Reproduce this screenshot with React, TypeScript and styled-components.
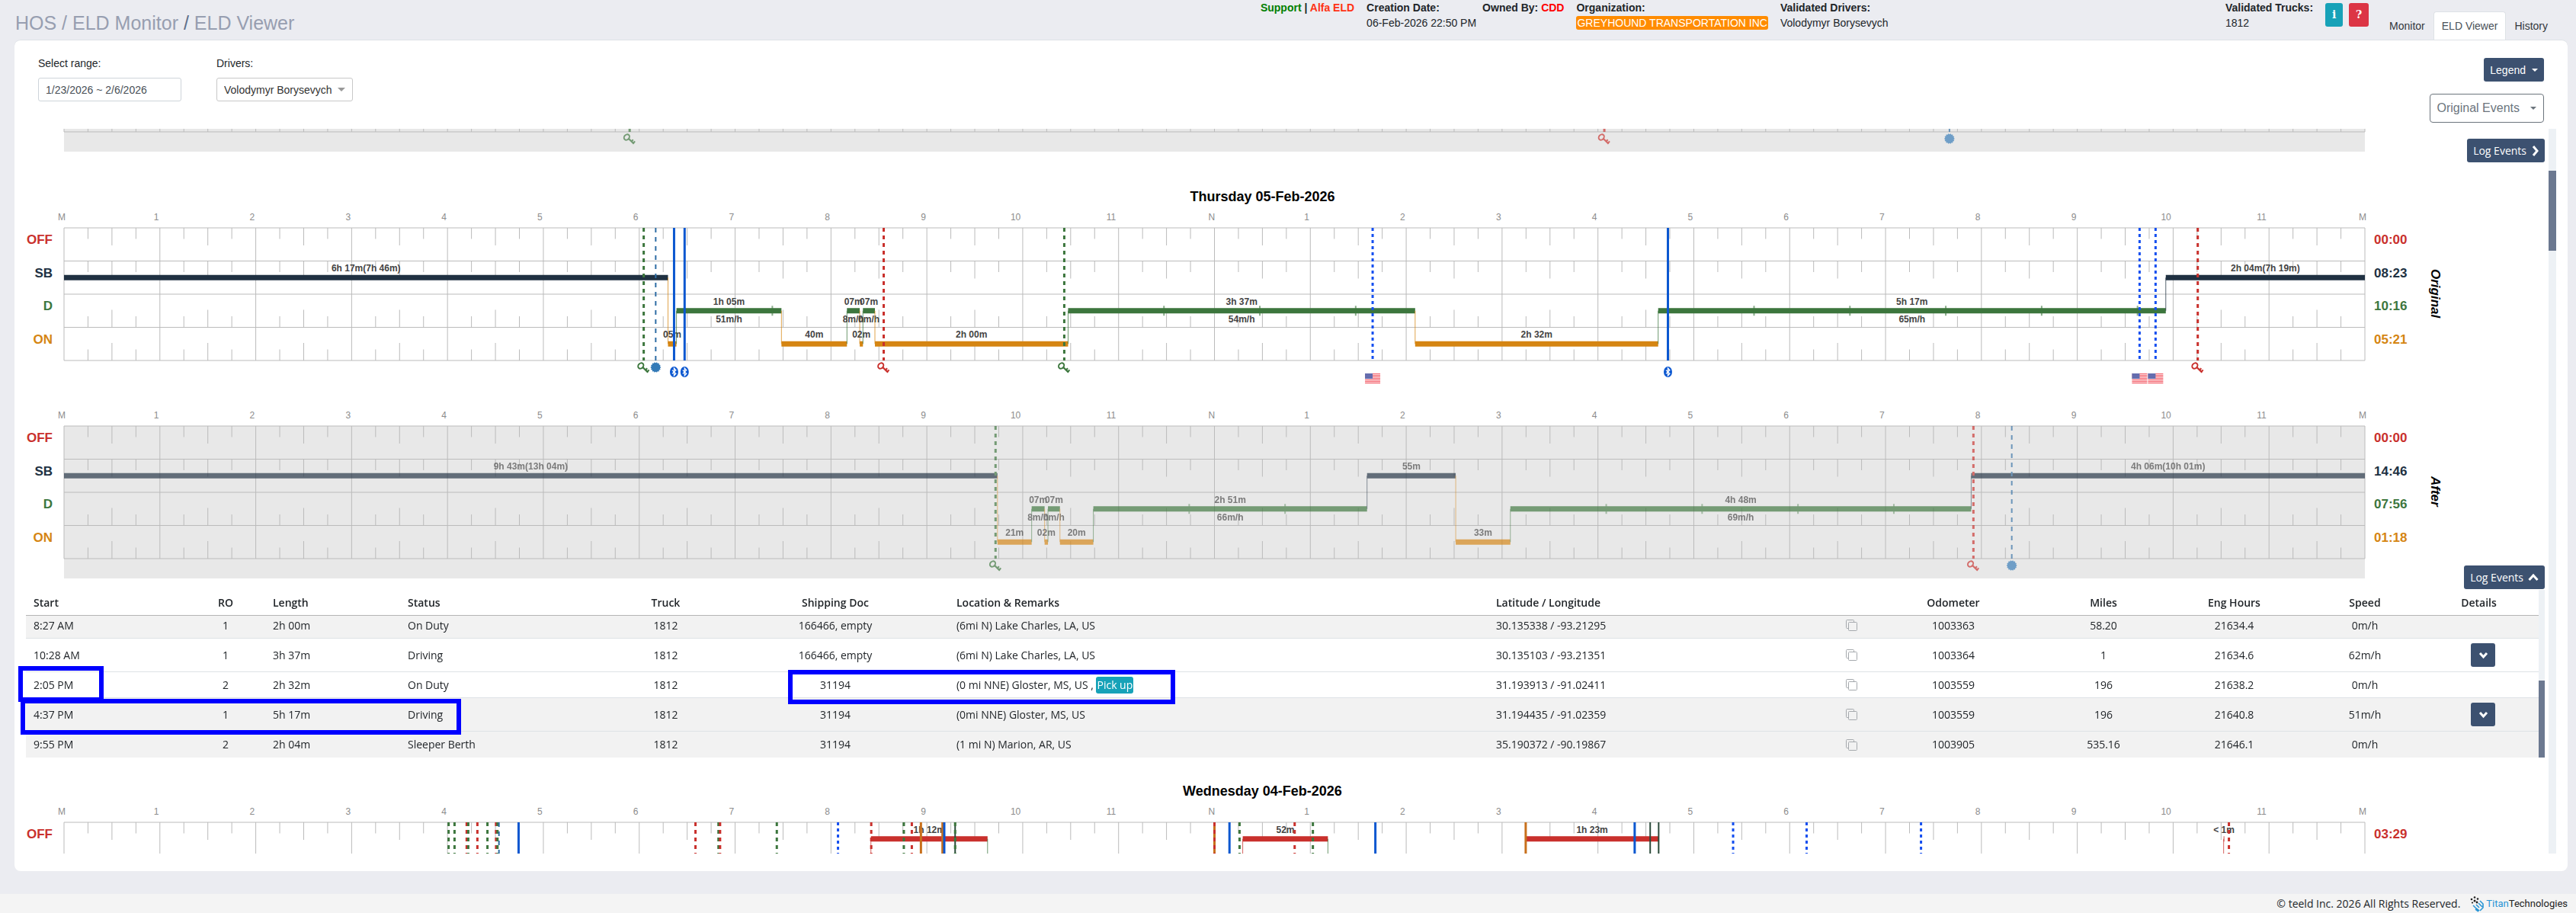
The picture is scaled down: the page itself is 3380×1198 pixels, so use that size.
import React from "react";
import styled, { createGlobalStyle, css } from "styled-components";

const Global = createGlobalStyle`
  *, *::before, *::after { box-sizing: border-box; }
  body { margin: 0; background: #ebecf1; color: #212529; font: 14px/20px "Liberation Sans", Arial, sans-serif; }
  button, input, select { font: inherit; }
`;

const palette = {
  navy: "#3c5170",
  off: "#c9302c",
  sb: "#203142",
  d: "#3c763d",
  on: "#d58512",
  blue: "#0b57d0",
  dotted: "#154ff0",
  thin: "#2e6da4",
};

/* ---------- page frame ---------- */

const Page = styled.div`
  display: flex;
  flex-direction: column;
  height: 100vh;
  min-height: 600px;
`;

const Header = styled.header`
  display: flex;
  align-items: flex-start;
  height: 53px;
  padding: 0 26px 0 20px;
`;

const Crumbs = styled.nav`
  flex: 1;
  padding-top: 15px;
  font-size: 25px;
  line-height: 30px;
  color: #60708a;
  a { color: #979eb0; text-decoration: none; }
`;

const Meta = styled.div`
  display: flex;
  gap: 16px;
`;

const MetaItem = styled.div<{ $width?: number }>`
  width: ${(p) => (p.$width ? `${p.$width}px` : "auto")};
  white-space: nowrap;
  strong { display: block; }
`;

const Ink = styled.span<{ $color: string }>`
  color: ${(p) => p.$color};
`;

const OrgBadge = styled.span`
  display: block;
  margin-top: 1px;
  padding: 0 1px;
  border-radius: 3px;
  background: #ff8c00;
  color: #fff;
  line-height: 18px;
`;

const SquareButton = styled.button<{ $bg: string; $width: number }>`
  width: ${(p) => p.$width}px;
  height: 31px;
  padding: 0;
  border: 0;
  border-radius: 3px;
  background: ${(p) => p.$bg};
  color: #fff;
  font: bold 14px/31px "DejaVu Serif", serif;
`;

const HelpButtons = styled.div`
  display: flex;
  gap: 8px;
  padding: 4px 16px 0 0;
`;

const Tabs = styled.nav`
  display: flex;
  padding-top: 15px;
`;

const Tab = styled.a<{ $active?: boolean }>`
  height: 38px;
  padding: 0 10px;
  border: 1px solid transparent;
  border-bottom: 0;
  border-radius: 4px 4px 0 0;
  line-height: 37px;
  color: #32363b;
  text-decoration: none;
  ${(p) => p.$active && css`
    background: #fff;
    border-color: #dee2e6;
    color: #495057;
  `}
`;

const Card = styled.main`
  display: flex;
  flex-direction: column;
  flex: 1;
  min-height: 0;
  margin: -1px 11px 30px 19px;
  padding: 0 15px 23px;
  border-top: 1px solid #dee2e6;
  border-radius: 8px;
  background: #fff;
`;

const Toolbar = styled.section`
  display: flex;
  height: 116px;
  padding: 20px 16px 0;
`;

const Field = styled.div<{ $width: number }>`
  width: ${(p) => p.$width}px;
  margin-right: 46px;
  label { display: block; height: 29px; }
`;

const RangeInput = styled.input`
  width: 100%;
  height: 31px;
  padding: 0 9px;
  border: 1px solid #ced4da;
  border-radius: 3px;
  color: #495057;
`;

const SelectBox = styled.div`
  position: relative;
  select {
    width: 100%;
    height: 31px;
    padding: 0 9px;
    appearance: none;
    border: 1px solid #c8c8c8;
    border-radius: 3px;
    background: #fff;
    color: #333;
  }
  &::after {
    content: "";
    position: absolute;
    right: 10px;
    top: 13px;
    border: 5px solid transparent;
    border-top-color: #999;
    border-bottom: 0;
    pointer-events: none;
  }
`;

const Actions = styled.div`
  display: flex;
  flex-direction: column;
  align-items: flex-end;
  gap: 16px;
  margin-left: auto;
  padding-top: 3px;
`;

const Button = styled.button<{ $variant?: "outline" }>`
  display: inline-flex;
  align-items: center;
  gap: 8px;
  height: 31px;
  padding: 0 8px;
  border: 0;
  border-radius: 3px;
  background: ${palette.navy};
  color: #fff;
  ${(p) => p.$variant === "outline" && css`
    gap: 14px;
    height: 38px;
    padding: 0 9px;
    border: 1px solid #6c757d;
    border-radius: 4px;
    background: #fff;
    color: #6c757d;
    font-size: 16px;
  `}
`;

const LogButton = styled(Button)`
  gap: 6px;
`;

const Caret = styled.i`
  border: 4px solid transparent;
  border-top-color: currentColor;
  border-bottom: 0;
`;

/* ---------- scrolling area ---------- */

const ScrollArea = styled.div`
  display: flex;
  flex: 1;
  min-height: 0;
  gap: 5px;
`;

const Viewport = styled.div`
  flex: 1;
  min-width: 0;
  margin-left: -15px;
  padding-left: 15px;
  overflow: hidden;
`;

const Track = styled.div<{ $width: number }>`
  flex: none;
  width: ${(p) => p.$width}px;
  background: #edf1f5;
`;

const Thumb = styled.div<{ $start: number; $size: number }>`
  height: ${(p) => p.$size}px;
  margin-top: ${(p) => p.$start}px;
  background: #6b7890;
`;

const DayTitle = styled.h2`
  margin: 31px 0 0;
  padding-right: 60px;
  font-size: 18px;
  line-height: 26px;
  text-align: center;
  color: #000;
`;

const ChartRow = styled.div<{ $gap?: number }>`
  display: grid;
  grid-template-columns: 50px minmax(0, 1fr) 72px 164px;
  margin-top: ${(p) => p.$gap || 0}px;
`;

const Labels = styled.div<{ $side: "left" | "right" }>`
  display: flex;
  flex-direction: column;
  height: 202px;
  padding: ${(p) => (p.$side === "left" ? "28px 15px 0 0" : "28px 0 0 12px")};
  text-align: ${(p) => (p.$side === "left" ? "right" : "left")};
  font-size: 17px;
  font-weight: bold;
  line-height: 32px;
`;

const LabelCell = styled.span<{ $color: string }>`
  flex: 0 0 25%;
  color: ${(p) => p.$color};
`;

const SideTitle = styled.div`
  width: 40px;
  height: 200px;
  margin-top: 14px;
  writing-mode: vertical-rl;
  text-align: center;
  font-size: 17px;
  line-height: 40px;
  font-weight: bold;
  font-style: italic;
  color: #000;
`;

const Plot = styled.svg`
  display: block;
  width: 100%;
  overflow: visible;
  text { font-family: "Liberation Sans", Arial, sans-serif; }
`;

const LogRow = styled.div`
  display: flex;
  justify-content: flex-end;
  align-items: flex-start;
  height: 32px;
  margin-top: -17px;
  font-family: "Open Sans", "Noto Sans", sans-serif;
`;

/* ---------- table ---------- */

const TableBox = styled.div`
  position: relative;
  display: flex;
`;

const Table = styled.table`
  flex: 1;
  min-width: 0;
  width: 100%;
  table-layout: fixed;
  border-collapse: separate;
  border-spacing: 0;
  font: 14px/20px "Open Sans", "Noto Sans", sans-serif;
`;

const Th = styled.th<{ $center?: boolean }>`
  height: 34px;
  padding: 0 10px;
  border-bottom: 1px solid #b5b5b5;
  text-align: ${(p) => (p.$center ? "center" : "left")};
  font-weight: 600;
`;

const Tr = styled.tr<{ $shade?: boolean; $height: number; $cut?: boolean }>`
  height: ${(p) => p.$height}px;
  background: ${(p) => (p.$shade ? "#f2f2f2" : "#fff")};
  td { padding-bottom: ${(p) => (p.$cut ? 4 : 0)}px; }
  &:not(:last-child) td { border-bottom: 1px solid #dee2e6; }
`;

const Td = styled.td<{ $center?: boolean }>`
  padding: 0 10px;
  text-align: ${(p) => (p.$center ? "center" : "left")};
  white-space: nowrap;
`;

const DetailTd = styled(Td)`
  padding-left: 22px;
`;

const Spread = styled.div`
  display: flex;
  justify-content: space-between;
  align-items: center;
  margin-right: -10px;
`;

const Tag = styled.span`
  display: inline-block;
  padding: 0 1px;
  border-radius: 3px;
  background: #17a2b8;
  color: #fff;
  line-height: 22px;
`;

const Bare = styled.button`
  display: flex;
  padding: 0;
  border: 0;
  background: none;
  color: #a5a9ad;
`;

const DetailButton = styled(Button)`
  justify-content: center;
  width: 32px;
  padding: 0;
  vertical-align: middle;
`;

const Marker = styled.div<{ $x: number; $y: number; $w: number; $h: number }>`
  position: absolute;
  left: ${(p) => p.$x}px;
  top: ${(p) => p.$y}px;
  width: ${(p) => p.$w}px;
  height: ${(p) => p.$h}px;
  border: 6px solid #00f;
  pointer-events: none;
`;

const Footer = styled.footer`
  display: flex;
  justify-content: flex-end;
  align-items: center;
  gap: 12px;
  height: 25px;
  padding-right: 11px;
  background: #f4f4f4;
  font-family: "Open Sans", "Noto Sans", sans-serif;
`;

const Brand = styled.span`
  display: flex;
  align-items: center;
  font: 13px/20px Roboto, sans-serif;
  color: #222;
  b { font-weight: 400; color: #2a95d5; }
`;

/* ---------- icons ---------- */

const Chevron = ({ dir }: { dir: "right" | "up" | "down" }) => {
  const d = { right: "M3 1l5 6-5 6", up: "M1.5 10L7 4l5.5 6", down: "M2 4l4.5 5L11 4" }[dir];
  const w = { right: 10, up: 14, down: 13 }[dir];
  return (
    <svg width={w} height="14" viewBox={`0 0 ${w} 14`} fill="none" stroke="#fff" strokeWidth="3" aria-hidden="true">
      <path d={d} />
    </svg>
  );
};

const CopyIcon = () => (
  <svg width="15" height="15" viewBox="0 0 15 15" fill="none" stroke="currentColor" aria-hidden="true">
    <path d="M3.5 11.5h-2a1 1 0 0 1-1-1v-9a1 1 0 0 1 1-1h8a1 1 0 0 1 1 1v2" />
    <rect x="3.5" y="3.5" width="11" height="11" rx="1" />
  </svg>
);

const burst = Array.from({ length: 28 }, (_, i) => {
  const r = i % 2 ? 5.7 : 7;
  const a = (i * Math.PI) / 14;
  return `${(Math.cos(a) * r).toFixed(2)},${(Math.sin(a) * r).toFixed(2)}`;
}).join(" ");

const KeyIcon = ({ color }: { color: string }) => (
  <g fill="none" stroke={color}>
    <ellipse cx="-3.8" cy="-2" rx="4" ry="3.2" transform="rotate(-50 -3.8 -2)" strokeWidth="2" />
    <path d="M-1.2 0L5.6 6.6" strokeWidth="2.2" />
    <path d="M2.2 3.8L4.6 1.2M4.6 6L7 3.4" strokeWidth="2" />
  </g>
);

const BluetoothIcon = () => (
  <g>
    <ellipse rx="5.5" ry="7" fill={palette.blue} />
    <path d="M-2.5-2.4L2.4 2.3 0 4.8V-4.8L2.4-2.3-2.5 2.4" fill="none" stroke="#fff" strokeWidth="1.3" />
  </g>
);

const FlagIcon = () => (
  <g opacity="0.7">
    <rect x="-10" y="-7" width="20" height="14" fill="#fff" />
    {[-7, -5, -3, -1, 1, 3, 5].map((y) => (
      <rect key={y} x="-10" y={y} width="20" height="1.2" fill="#f0212f" />
    ))}
    <rect x="-10" y="-7" width="10" height="7" fill="#23308c" />
  </g>
);

const BrandMark = () => (
  <svg width="22" height="22" viewBox="0 0 22 22" aria-hidden="true">
    <g fill="#222">
      <circle cx="3" cy="5" r="1.3" /><circle cx="7" cy="2.5" r="1.3" /><circle cx="7" cy="7" r="1.5" />
      <circle cx="11" cy="4.5" r="1.3" /><circle cx="4" cy="9.5" r="1.1" /><circle cx="10" cy="9" r="1.4" />
    </g>
    <g fill="none" stroke="#2a95d5" strokeWidth="1.6">
      <path d="M5 13l4 4 4 3M9 12l4 4M12 10l5 5M14 7l4 4v5l-4 4M8 18l4 3" />
    </g>
  </svg>
);

/* ---------- duty chart ---------- */

type Row = "off" | "sb" | "d" | "on";
type Segment = [row: Row, from: number, to: number, label?: string, speed?: string];
type Kind = "keyOn" | "keyOff" | "sync" | "bt" | "border" | "solidOn" | "solidDark";
type Mark = [kind: Kind, minute: number];

const TOP = 28;
const ROW = 43.5;
const rows: Row[] = ["off", "sb", "d", "on"];
const pct = (m: number) => `${m / 14.4}%`;
const mid = (r: Row) => TOP + (rows.indexOf(r) + 0.5) * ROW;
const hours = ["M", 1, 2, 3, 4, 5, 6, 7, 8, 9, 10, 11, "N", 1, 2, 3, 4, 5, 6, 7, 8, 9, 10, 11, "M"].map(String);

const lineStyle: Record<Kind, { color: string; width: number; dash?: string }> = {
  keyOn: { color: palette.d, width: 3, dash: "5 5" },
  keyOff: { color: palette.off, width: 3, dash: "5 5" },
  sync: { color: palette.thin, width: 2, dash: "6 6" },
  border: { color: palette.dotted, width: 3, dash: "4 4" },
  bt: { color: palette.blue, width: 3 },
  solidOn: { color: "#c8701c", width: 3 },
  solidDark: { color: "#2b4a3a", width: 2 },
};

const MarkIcon = ({ kind }: { kind: Kind }) => {
  if (kind === "keyOn" || kind === "keyOff") return <KeyIcon color={lineStyle[kind].color} />;
  if (kind === "sync") return <polygon points={burst} fill="#337ab7" />;
  if (kind === "bt") return <g transform="translate(0 6)"><BluetoothIcon /></g>;
  if (kind === "border") return <g transform="translate(0 15)"><FlagIcon /></g>;
  return null;
};

const GridLines = () => (
  <g stroke="#bbb">
    {[0, 1, 2, 3, 4].map((i) => (
      <line key={i} x1="0" x2="100%" y1={TOP + i * ROW} y2={TOP + i * ROW} />
    ))}
    {Array.from({ length: 97 }, (_, q) => {
      const x = pct(q * 15);
      if (q % 4 === 0) return <line key={q} x1={x} x2={x} y1={TOP} y2={TOP + 4 * ROW} />;
      const len = q % 2 ? 14.5 : 23;
      return rows.map((r, i) => {
        const a = i < 2 ? TOP + i * ROW : TOP + (i + 1) * ROW - len;
        return <line key={`${q}${r}`} x1={x} x2={x} y1={a} y2={a + len} />;
      });
    })}
  </g>
);

const SegmentBar = ({ seg, prev }: { seg: Segment; prev?: Segment }) => {
  const [row, from, to, label, speed] = seg;
  const y = mid(row);
  const ticks: number[] = [];
  if (row === "d") for (let m = from + 60; m < to; m += 60) ticks.push(m);
  return (
    <g>
      {prev && prev[2] === from && (
        <line x1={pct(from)} x2={pct(from)} y1={mid(prev[0])} y2={y} stroke={palette[row]} strokeOpacity="0.75" />
      )}
      <rect x={pct(from)} width={pct(to - from)} y={y - 3.5} height="7" fill={palette[row]} />
      {ticks.map((m) => (
        <line key={m} x1={pct(m)} x2={pct(m)} y1={y - 6.5} y2={y + 6.5} stroke={palette.d} strokeOpacity="0.6" strokeWidth="2" />
      ))}
      {label && <text x={pct((from + to) / 2)} y={y - 8}>{label}</text>}
      {speed && <text x={pct((from + to) / 2)} y={y + 15}>{speed}</text>}
    </g>
  );
};

interface PlotProps {
  segments: Segment[];
  marks: Mark[];
  dim?: boolean;
  bare?: boolean;
}

const DutyPlot = ({ segments, marks, dim, bare }: PlotProps) => (
  <Plot height="228" role="img" aria-label="Duty status by hour">
    {dim && <rect x="0" width="100%" y={TOP} height="200" fill="#e8e8e8" />}
    {!bare && (
      <g fill="#8c8c8c" fontSize="12">
        {hours.map((h, i) => (
          <text key={i} x={pct(i * 60)} dx={-8 * h.length} y="18">{h}</text>
        ))}
      </g>
    )}
    <GridLines />
    <g opacity={dim ? 0.67 : 1}>
      <g fill="#444" fontSize="12" fontWeight="bold" textAnchor="middle">
        {segments.map((s, i) => (
          <SegmentBar key={i} seg={s} prev={segments[i - 1]} />
        ))}
      </g>
      {marks.map(([kind, m], i) => {
        const s = lineStyle[kind];
        return (
          <g key={i}>
            <line x1={pct(m)} x2={pct(m)} y1={TOP} y2={TOP + 4 * ROW} stroke={s.color} strokeWidth={s.width} strokeDasharray={s.dash} />
            <svg x={pct(m)} y={TOP + 183} overflow="visible"><MarkIcon kind={kind} /></svg>
          </g>
        );
      })}
    </g>
  </Plot>
);

const rowNames: Record<Row, string> = { off: "OFF", sb: "SB", d: "D", on: "ON" };

interface DutyChartProps extends PlotProps {
  totals: string[];
  title?: string;
  gap?: number;
}

const DutyChart = ({ totals, title, gap, ...plot }: DutyChartProps) => (
  <ChartRow $gap={gap}>
    <Labels $side="left">
      {totals.map((_, i) => <LabelCell key={i} $color={palette[rows[i]]}>{rowNames[rows[i]]}</LabelCell>)}
    </Labels>
    <DutyPlot {...plot} />
    <Labels $side="right">
      {totals.map((t, i) => <LabelCell key={i} $color={palette[rows[i]]}>{t}</LabelCell>)}
    </Labels>
    {title && <SideTitle>{title}</SideTitle>}
  </ChartRow>
);

const Previous = styled.div`
  margin-top: -198px;
`;

/* ---------- data ---------- */

const fridayMarks: Mark[] = [["keyOn", 354], ["keyOff", 964], ["sync", 1180]];

const original: Segment[] = [
  ["sb", 0, 378, "6h 17m(7h 46m)"],
  ["on", 378, 383.3, "05m"],
  ["d", 383.3, 449, "1h 05m", "51m/h"],
  ["on", 449, 490, "40m"],
  ["d", 490, 498, "07m", "8m/h"],
  ["on", 498, 500, "02m"],
  ["d", 500, 507.5, "07m", "0m/h"],
  ["on", 507.5, 628.4, "2h 00m"],
  ["d", 628.4, 845.6, "3h 37m", "54m/h"],
  ["on", 845.6, 997.7, "2h 32m"],
  ["d", 997.7, 1315.4, "5h 17m", "65m/h"],
  ["sb", 1315.4, 1440, "2h 04m(7h 19m)"],
];
const originalMarks: Mark[] = [
  ["keyOn", 362.8], ["sync", 370.3], ["bt", 381.8], ["bt", 388.4], ["keyOff", 513], ["keyOn", 626],
  ["border", 819], ["bt", 1003.8], ["border", 1299], ["border", 1309], ["keyOff", 1335.4],
];

const after: Segment[] = [
  ["sb", 0, 584.2, "9h 43m(13h 04m)"],
  ["on", 584.2, 605.6, "21m"],
  ["d", 605.6, 613.7, "07m", "8m/h"],
  ["on", 613.7, 615.8, "02m"],
  ["d", 615.8, 623.3, "07m", "0m/h"],
  ["on", 623.3, 644.2, "20m"],
  ["d", 644.2, 815.5, "2h 51m", "66m/h"],
  ["sb", 815.5, 871, "55m"],
  ["on", 871, 905.2, "33m"],
  ["d", 905.2, 1193.6, "4h 48m", "69m/h"],
  ["sb", 1193.6, 1440, "4h 06m(10h 01m)"],
];
const afterMarks: Mark[] = [["keyOn", 583], ["keyOff", 1195], ["sync", 1219]];

const wednesday: Segment[] = [
  ["on", 490, 505],
  ["off", 505, 578, "1h 12m"],
  ["d", 578, 590],
  ["on", 725, 737.7],
  ["off", 737.7, 791, "52m"],
  ["d", 791, 800],
  ["off", 914.8, 998, "1h 23m"],
  ["d", 998, 1010],
  ["sb", 1340, 1351.6],
  ["off", 1351.6, 1352, "< 1m"],
];
const wednesdayMarks: Mark[] = [
  ["keyOn", 240.7], ["keyOn", 244.4], ["keyOff", 252], ["keyOn", 253], ["keyOff", 258.7], ["keyOn", 265],
  ["keyOff", 270.4], ["keyOn", 271.3], ["sync", 272.2], ["bt", 284.5], ["keyOff", 395.2], ["keyOn", 409.6],
  ["keyOff", 410.6], ["keyOn", 446.1], ["border", 484.4], ["keyOff", 505.2], ["keyOn", 525.6], ["keyOff", 530.6],
  ["solidOn", 536.3], ["solidOn", 549.8], ["bt", 550.9], ["solidDark", 557.7], ["keyOn", 557.7],
  ["solidOn", 720], ["keyOff", 720], ["bt", 729.4], ["keyOn", 735.7], ["keyOff", 770.2], ["keyOn", 781.6],
  ["bt", 820.7], ["solidOn", 914.8], ["bt", 983], ["solidDark", 992.7], ["solidDark", 998],
  ["border", 1044.6], ["border", 1090.6], ["border", 1162.2], ["keyOff", 1354.9],
];

const columns: [name: string, share: number, center?: boolean][] = [
  ["Start", 210], ["RO", 104, true], ["Length", 177], ["Status", 275], ["Truck", 147, true],
  ["Shipping Doc", 298, true], ["Location & Remarks", 708], ["Latitude / Longitude", 484],
  ["Odometer", 252, true], ["Miles", 142, true], ["Eng Hours", 201, true], ["Speed", 142, true], ["Details", 157, true],
];
const totalShare = columns.reduce((sum, c) => sum + c[1], 0);

const events = [
  { cells: ["8:27 AM", "1", "2h 00m", "On Duty", "1812", "166466, empty", "(6mi N) Lake Charles, LA, US", "30.135338 / -93.21295", "1003363", "58.20", "21634.4", "0m/h"], height: 30, shade: true, cut: true },
  { cells: ["10:28 AM", "1", "3h 37m", "Driving", "1812", "166466, empty", "(6mi N) Lake Charles, LA, US", "30.135103 / -93.21351", "1003364", "1", "21634.6", "62m/h"], height: 44, details: true },
  { cells: ["2:05 PM", "2", "2h 32m", "On Duty", "1812", "31194", "(0 mi NNE) Gloster, MS, US , ", "31.193913 / -91.02411", "1003559", "196", "21638.2", "0m/h"], height: 34, tag: "Pick up" },
  { cells: ["4:37 PM", "1", "5h 17m", "Driving", "1812", "31194", "(0mi NNE) Gloster, MS, US", "31.194435 / -91.02359", "1003559", "196", "21640.8", "51m/h"], height: 44, shade: true, details: true },
  { cells: ["9:55 PM", "2", "2h 04m", "Sleeper Berth", "1812", "31194", "(1 mi N) Marion, AR, US", "35.190372 / -90.19867", "1003905", "535.16", "21646.1", "0m/h"], height: 34, shade: true },
];

const EventTable = () => (
  <TableBox>
    <Table>
      <colgroup>
        {columns.map(([name, share]) => (
          <col key={name} style={{ width: `${(share / totalShare) * 100}%` }} />
        ))}
      </colgroup>
      <thead>
        <tr>{columns.map(([name, , center]) => <Th key={name} scope="col" $center={center}>{name}</Th>)}</tr>
      </thead>
      <tbody>
        {events.map((e) => (
          <Tr key={e.cells[0]} $height={e.height} $shade={e.shade} $cut={e.cut}>
            {e.cells.map((c, i) => (
              <Td key={i} $center={columns[i][2]}>
                {i === 7 ? (
                  <Spread>{c}<Bare aria-label="Copy coordinates"><CopyIcon /></Bare></Spread>
                ) : c}
                {i === 6 && e.tag && <Tag>{e.tag}</Tag>}
              </Td>
            ))}
            <DetailTd $center>
              {e.details && <DetailButton aria-label="Show details"><Chevron dir="down" /></DetailButton>}
            </DetailTd>
          </Tr>
        ))}
      </tbody>
    </Table>
    <Track $width={8}><Thumb $start={119} $size={101} /></Track>
    <Marker $x={-10} $y={100} $w={112} $h={47} />
    <Marker $x={-7} $y={143} $w={578} $h={47} />
    <Marker $x={1000} $y={105} $w={508} $h={45} />
  </TableBox>
);

export default function App() {
  return (
    <Page>
      <Global />
      <Header>
        <Crumbs>
          <a href="#hos">HOS / ELD Monitor</a> / <a href="#viewer">ELD Viewer</a>
        </Crumbs>
        <Meta>
          <MetaItem><strong><Ink $color="green">Support</Ink> | <Ink $color="#ff3214">Alfa ELD</Ink></strong></MetaItem>
          <MetaItem $width={136}><strong>Creation Date:</strong>06-Feb-2026 22:50 PM</MetaItem>
          <MetaItem><strong>Owned By: <Ink $color="red">CDD</Ink></strong></MetaItem>
          <MetaItem><strong>Organization:</strong><OrgBadge>GREYHOUND TRANSPORTATION INC</OrgBadge></MetaItem>
          <MetaItem $width={568}><strong>Validated Drivers:</strong>Volodymyr Borysevych</MetaItem>
          <MetaItem><strong>Validated Trucks:</strong>1812</MetaItem>
          <HelpButtons>
            <SquareButton $bg="#17a2b8" $width={23} aria-label="Information">i</SquareButton>
            <SquareButton $bg="#dc3545" $width={26} aria-label="Help">?</SquareButton>
          </HelpButtons>
        </Meta>
        <Tabs>
          <Tab href="#monitor">Monitor</Tab>
          <Tab href="#viewer" $active>ELD Viewer</Tab>
          <Tab href="#history">History</Tab>
        </Tabs>
      </Header>

      <Card>
        <Toolbar>
          <Field $width={188}>
            <label htmlFor="range">Select range:</label>
            <RangeInput id="range" type="text" defaultValue="1/23/2026 ~ 2/6/2026" />
          </Field>
          <Field $width={179}>
            <label htmlFor="driver">Drivers:</label>
            <SelectBox>
              <select id="driver"><option>Volodymyr Borysevych</option></select>
            </SelectBox>
          </Field>
          <Actions>
            <Button>Legend <Caret /></Button>
            <Button $variant="outline">Original Events <Caret /></Button>
          </Actions>
        </Toolbar>

        <ScrollArea>
          <Viewport>
            <Previous>
              <DutyChart segments={[]} marks={fridayMarks} totals={[]} dim bare />
            </Previous>
            <LogRow><LogButton>Log Events <Chevron dir="right" /></LogButton></LogRow>

            <DayTitle>Thursday 05-Feb-2026</DayTitle>
            <DutyChart segments={original} marks={originalMarks} totals={["00:00", "08:23", "10:16", "05:21"]} title="Original" />
            <DutyChart segments={after} marks={afterMarks} totals={["00:00", "14:46", "07:56", "01:18"]} title="After" dim gap={32} />
            <LogRow><LogButton>Log Events <Chevron dir="up" /></LogButton></LogRow>
            <EventTable />

            <DayTitle>Wednesday 04-Feb-2026</DayTitle>
            <DutyChart segments={wednesday} marks={wednesdayMarks} totals={["03:29"]} />
          </Viewport>
          <Track $width={10}><Thumb $start={55} $size={105} /></Track>
        </ScrollArea>
      </Card>

      <Footer>
        <span>© teeld Inc. 2026 All Rights Reserved.</span>
        <Brand><BrandMark /><b>Titan</b>Technologies</Brand>
      </Footer>
    </Page>
  );
}
